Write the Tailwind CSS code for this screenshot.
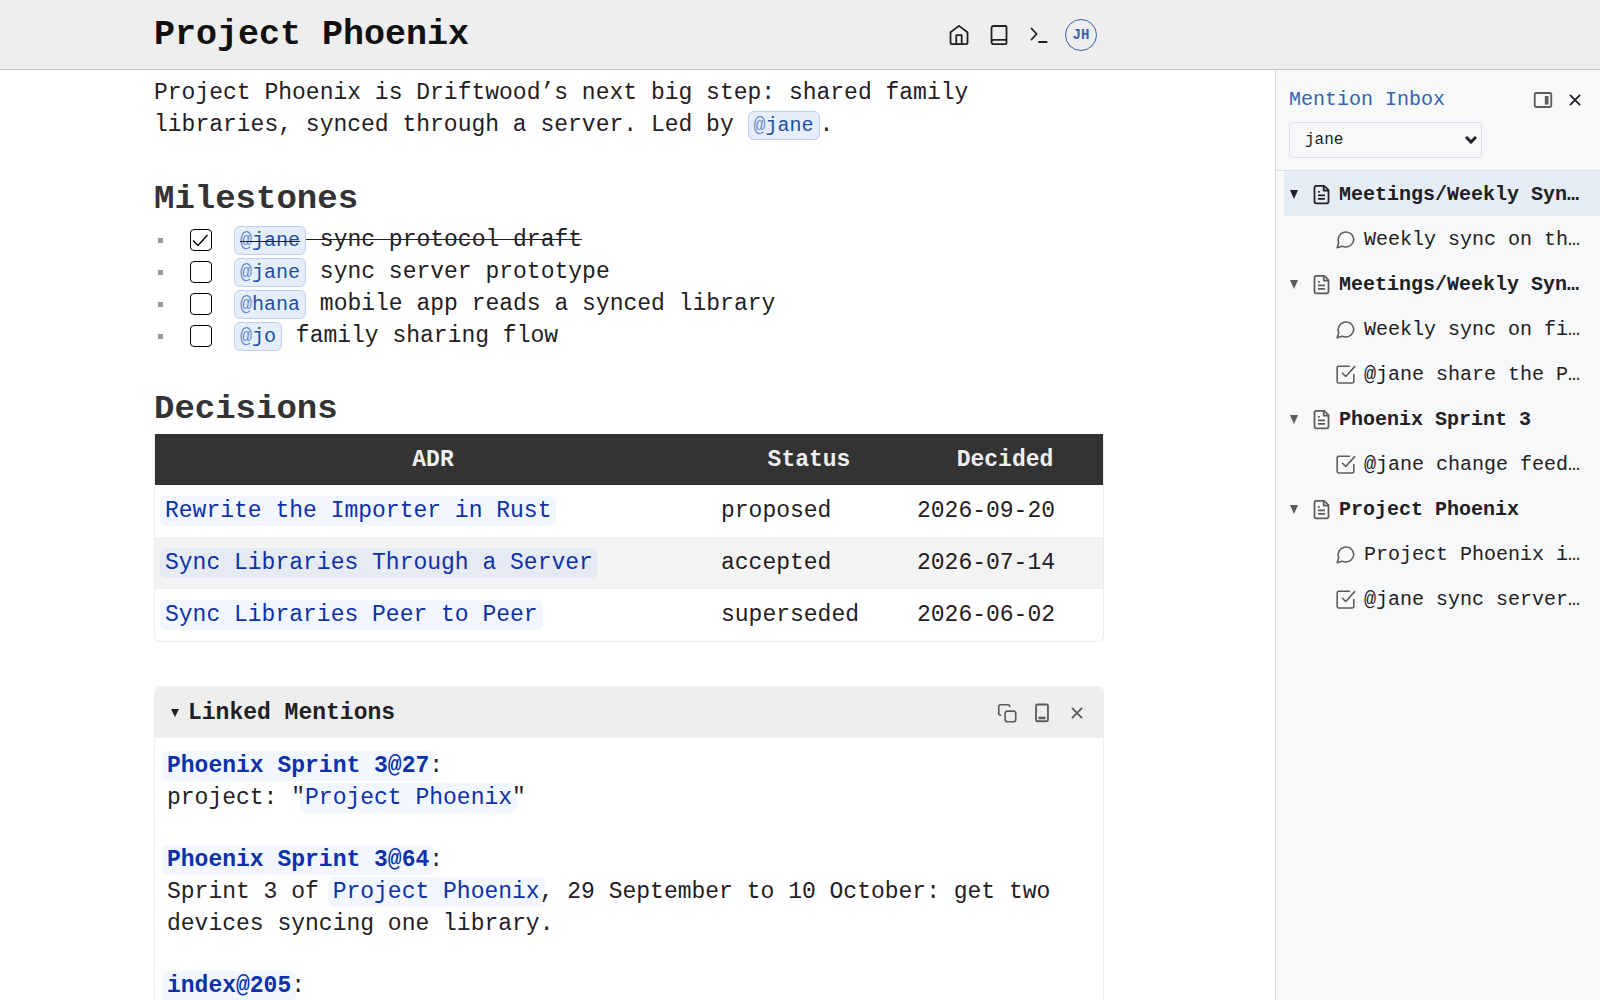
<!DOCTYPE html>
<html lang="en">
<head>
<meta charset="utf-8">
<title>Project Phoenix</title>
<script src="https://cdn.jsdelivr.net/npm/@tailwindcss/browser@4"></script>
</head>
<body class="flex h-screen flex-col overflow-hidden bg-white font-['Liberation_Mono',monospace] text-[23px] leading-8 text-[#1f2023]">

<svg class="hidden" aria-hidden="true">
  <symbol id="home" viewBox="0 0 24 24"><path d="M3.500 9.200L12 2.900l8.500 6.300v10.300a1.600 1.600 0 0 1-1.600 1.600H5.100a1.600 1.600 0 0 1-1.600-1.600z"/><path d="M9.300 21v-8.800h5.400V21"/></symbol>
  <symbol id="book" viewBox="0 0 24 24"><path d="M4.500 19V5a2 2 0 0 1 2-2H18.500a1 1 0 0 1 1 1V20.100a1 1 0 0 1-1 1H6.500a2 2 0 0 1-2-2a2 2 0 0 1 2-2.300H19.500"/></symbol>
  <symbol id="terminal" viewBox="0 0 24 24"><path d="M4.500 5.500l5.200 5.500-5.200 5.500M12 19h7.700"/></symbol>
  <symbol id="close" viewBox="0 0 24 24"><path d="M17 7L7 17M7 7l10 10"/></symbol>
  <symbol id="copy" viewBox="0 0 24 24"><rect x="10" y="10" width="11.500" height="11.500" rx="2.500"/><path d="M5 14.500a2 2 0 0 1-2-2V5a2 2 0 0 1 2-2h8a2 2 0 0 1 2 2"/></symbol>
  <symbol id="dock-bottom" viewBox="0 0 24 24"><rect x="5.500" y="2.700" width="13" height="18.300" rx="1.500"/><path d="M8.200 17.400h7.600" stroke-width="2.800"/></symbol>
  <symbol id="dock-right" viewBox="0 0 24 24"><rect x="3" y="4.400" width="18" height="15.200" rx="1.500"/><path d="M16 7.600v9.400" stroke-width="4"/></symbol>
  <symbol id="file" viewBox="0 0 24 24"><path d="M15 2H6a2 2 0 0 0-2 2v16a2 2 0 0 0 2 2h12a2 2 0 0 0 2-2V7zM14.500 2v5.500H20M16 13H8M16 17H8M10 9H8"/></symbol>
  <symbol id="comment" viewBox="0 0 24 24"><path d="M21.500 11.500a9 9 0 0 1-9.500 9 9.500 9.500 0 0 1-4-.9L2.500 21.500l1.700-5.700A9 9 0 1 1 21.500 11.500z"/></symbol>
  <symbol id="task" viewBox="0 0 24 24"><path d="M8.500 10.500l3.800 3.800L22.500 3M21.500 12v8a1.700 1.700 0 0 1-1.700 1.700H4.200A1.700 1.700 0 0 1 2.500 20V4.200a1.700 1.700 0 0 1 1.700-1.700h12.300"/></symbol>
</svg>

<header class="h-[70px] shrink-0 border-b border-[#c8c8c8] bg-[#eeeeee] pr-[342px]">
  <div class="mx-auto flex h-full w-full max-w-[950px] items-center justify-between pr-[7px]">
    <h1 class="text-[35px] leading-[48px] font-bold text-[#111111]">Project Phoenix</h1>
    <div class="flex items-center gap-[14px]">
      <nav class="flex items-center gap-4" aria-label="Main">
        <button type="button" aria-label="Home"><svg class="size-6 fill-none stroke-current stroke-[1.8] [stroke-linecap:round] [stroke-linejoin:round]"><use href="#home"/></svg></button>
        <button type="button" aria-label="Library"><svg class="size-6 fill-none stroke-current stroke-[1.8] [stroke-linecap:round] [stroke-linejoin:round]"><use href="#book"/></svg></button>
        <button type="button" aria-label="Commands"><svg class="size-6 fill-none stroke-current stroke-[1.8] [stroke-linecap:round] [stroke-linejoin:round]"><use href="#terminal"/></svg></button>
      </nav>
      <button type="button" aria-label="Account JH" class="grid size-8 place-items-center rounded-full border border-[#3564ae] text-[14px] leading-none font-bold text-[#3564ae]">JH</button>
    </div>
  </div>
</header>

<div class="flex min-h-0 flex-1">
  <main class="min-w-0 flex-1 overflow-hidden pr-[17px]">
    <div class="mx-auto w-full max-w-[950px] pt-[7px]">
      <p>Project Phoenix is Driftwood’s next big step: shared family libraries, synced through a server. Led by <a href="#" class="rounded-md border border-[#bfd0ee] bg-[#e6eefb] px-[5px] py-[2px] text-[20px] text-[#1c4fa3]"><span class="text-[#6d8fcb]">@</span>jane</a>.</p>

      <h2 class="mt-8 text-[34px] leading-[50px] font-bold text-[#333333]">Milestones</h2>
      <ul>
        <li class="flex h-8 items-center">
          <span class="ml-1 size-[5px] bg-[#999999]"></span>
          <span class="relative ml-[27px] size-[22px]">
            <input id="m1" type="checkbox" checked class="block size-[22px] appearance-none rounded-sm border border-black bg-white">
            <svg class="pointer-events-none absolute inset-0 size-[22px] fill-none stroke-black stroke-[1.4]" viewBox="0 0 22 22"><path d="M3 11.500l5 5L17.500 6"/></svg>
          </span>
          <label for="m1" class="ml-[22px] line-through decoration-1"><span class="rounded-md border border-[#bfd0ee] bg-[#e6eefb] px-[5px] py-[2px] text-[20px] text-[#1c4fa3]"><span class="text-[#6d8fcb]">@</span>jane</span> sync protocol draft</label>
        </li>
        <li class="flex h-8 items-center">
          <span class="ml-1 size-[5px] bg-[#999999]"></span>
          <input id="m2" type="checkbox" class="ml-[27px] size-[22px] appearance-none rounded-sm border border-black bg-white">
          <label for="m2" class="ml-[22px]"><span class="rounded-md border border-[#bfd0ee] bg-[#e6eefb] px-[5px] py-[2px] text-[20px] text-[#1c4fa3]"><span class="text-[#6d8fcb]">@</span>jane</span> sync server prototype</label>
        </li>
        <li class="flex h-8 items-center">
          <span class="ml-1 size-[5px] bg-[#999999]"></span>
          <input id="m3" type="checkbox" class="ml-[27px] size-[22px] appearance-none rounded-sm border border-black bg-white">
          <label for="m3" class="ml-[22px]"><span class="rounded-md border border-[#bfd0ee] bg-[#e6eefb] px-[5px] py-[2px] text-[20px] text-[#1c4fa3]"><span class="text-[#6d8fcb]">@</span>hana</span> mobile app reads a synced library</label>
        </li>
        <li class="flex h-8 items-center">
          <span class="ml-1 size-[5px] bg-[#999999]"></span>
          <input id="m4" type="checkbox" class="ml-[27px] size-[22px] appearance-none rounded-sm border border-black bg-white">
          <label for="m4" class="ml-[22px]"><span class="rounded-md border border-[#bfd0ee] bg-[#e6eefb] px-[5px] py-[2px] text-[20px] text-[#1c4fa3]"><span class="text-[#6d8fcb]">@</span>jo</span> family sharing flow</label>
        </li>
      </ul>

      <h2 class="mt-8 text-[34px] leading-[50px] font-bold text-[#333333]">Decisions</h2>
      <div class="overflow-hidden rounded-b-md border border-t-0 border-[#ebebeb]">
        <table class="w-full table-fixed text-left">
          <thead class="bg-[#333333] text-center text-[#eeeeee]">
            <tr class="h-[51px]"><th class="w-[556px] px-[10px]">ADR</th><th class="px-[10px]">Status</th><th class="px-[10px]">Decided</th></tr>
          </thead>
          <tbody>
            <tr class="h-[52px]"><td class="px-[10px]"><a href="#" class="-mx-[5px] rounded-md bg-[#0050ff]/5 px-[5px] py-[2px] text-[#0c31a8]">Rewrite the Importer in Rust</a></td><td class="px-[10px]">proposed</td><td class="px-[10px]">2026-09-20</td></tr>
            <tr class="h-[52px] bg-[#f3f3f3]"><td class="px-[10px]"><a href="#" class="-mx-[5px] rounded-md bg-[#0050ff]/5 px-[5px] py-[2px] text-[#0c31a8]">Sync Libraries Through a Server</a></td><td class="px-[10px]">accepted</td><td class="px-[10px]">2026-07-14</td></tr>
            <tr class="h-[52px]"><td class="px-[10px]"><a href="#" class="-mx-[5px] rounded-md bg-[#0050ff]/5 px-[5px] py-[2px] text-[#0c31a8]">Sync Libraries Peer to Peer</a></td><td class="px-[10px]">superseded</td><td class="px-[10px]">2026-06-02</td></tr>
          </tbody>
        </table>
      </div>

      <section class="mt-11 rounded-md border border-[#eeeeee] pb-40">
        <div class="flex h-[51px] items-center rounded-t-md bg-[#eeeeee] pr-[15px] pl-4">
          <button type="button" class="flex items-center gap-[9px] font-bold" aria-expanded="true"><svg class="h-2 w-2 fill-current" viewBox="0 0 8 8"><path d="M0 0h8L4 8z"/></svg>Linked Mentions</button>
          <div class="ml-auto flex gap-[13px] text-[#5c5c5c]">
            <button type="button" aria-label="Copy"><svg class="size-[22px] fill-none stroke-current stroke-[1.8] [stroke-linecap:round] [stroke-linejoin:round]"><use href="#copy"/></svg></button>
            <button type="button" aria-label="Dock at bottom"><svg class="size-[22px] fill-none stroke-current stroke-2"><use href="#dock-bottom"/></svg></button>
            <button type="button" aria-label="Close"><svg class="size-[22px] fill-none stroke-current stroke-2 [stroke-linecap:round]"><use href="#close"/></svg></button>
          </div>
        </div>
        <div class="flex flex-col gap-[30px] px-3 pt-3">
          <p><a href="#" class="-mx-[5px] rounded-md bg-[#0050ff]/5 px-[5px] py-[2px] font-bold text-[#0c31a8]">Phoenix Sprint 3@27</a>:<br>project: "<a href="#" class="-mx-[5px] rounded-md bg-[#0050ff]/5 px-[5px] py-[2px] text-[#0c31a8]">Project Phoenix</a>"</p>
          <p><a href="#" class="-mx-[5px] rounded-md bg-[#0050ff]/5 px-[5px] py-[2px] font-bold text-[#0c31a8]">Phoenix Sprint 3@64</a>:<br>Sprint 3 of <a href="#" class="-mx-[5px] rounded-md bg-[#0050ff]/5 px-[5px] py-[2px] text-[#0c31a8]">Project Phoenix</a>, 29 September to 10 October: get two devices syncing one library.</p>
          <p><a href="#" class="-mx-[5px] rounded-md bg-[#0050ff]/5 px-[5px] py-[2px] font-bold text-[#0c31a8]">index@205</a>:</p>
        </div>
      </section>
    </div>
  </main>

  <aside class="w-[325px] shrink-0 border-l border-[#d5d8dc] bg-[#f6f8fa] text-[20px]">
    <div class="h-[101px] border-b border-[#dcdfe3] pt-[14px] pl-[13px]">
      <div class="flex items-center pr-[14px]">
        <h2 class="text-[#3564ae]">Mention Inbox</h2>
        <div class="ml-auto flex gap-[10px]">
          <button type="button" aria-label="Dock at right" class="text-[#5c5c5c]"><svg class="size-[22px] fill-none stroke-current stroke-2"><use href="#dock-right"/></svg></button>
          <button type="button" aria-label="Close inbox"><svg class="size-[22px] fill-none stroke-current stroke-2 [stroke-linecap:round]"><use href="#close"/></svg></button>
        </div>
      </div>
      <div class="relative mt-[6px] w-[193px]">
        <select aria-label="Person" class="block h-9 w-full appearance-none rounded-sm border border-[#dcdfe3] bg-transparent px-[15px] text-[16px]"><option>jane</option></select>
        <svg class="pointer-events-none absolute top-[14px] right-[5px] h-2 w-3 fill-none stroke-current stroke-3" viewBox="0 0 12 8"><path d="M1 1l5 5 5-5"/></svg>
      </div>
    </div>
    <ul class="pl-2 text-nowrap">
      <li class="flex h-[45px] items-center bg-[#e5ecf6] pt-[2px] pr-4 pl-[6px] font-bold"><svg class="h-[9px] w-2 shrink-0 fill-current" viewBox="0 0 8 9"><path d="M0 0h8L4 9z"/></svg><svg class="mr-[7px] ml-[13px] size-[21px] shrink-0 fill-none stroke-current stroke-2 [stroke-linejoin:round]"><use href="#file"/></svg><span>Meetings/Weekly Syn…</span></li>
      <li class="flex h-[45px] items-center pt-[2px] pr-4 pl-[51px]"><svg class="mr-2 size-[21px] shrink-0 fill-none stroke-[#5c5c5c] stroke-[1.8] [stroke-linejoin:round]"><use href="#comment"/></svg><span>Weekly sync on th…</span></li>
      <li class="flex h-[45px] items-center pt-[2px] pr-4 pl-[6px] font-bold"><svg class="h-[9px] w-2 shrink-0 fill-[#5c5c5c]" viewBox="0 0 8 9"><path d="M0 0h8L4 9z"/></svg><svg class="mr-[7px] ml-[13px] size-[21px] shrink-0 fill-none stroke-[#5c5c5c] stroke-2 [stroke-linejoin:round]"><use href="#file"/></svg><span>Meetings/Weekly Syn…</span></li>
      <li class="flex h-[45px] items-center pt-[2px] pr-4 pl-[51px]"><svg class="mr-2 size-[21px] shrink-0 fill-none stroke-[#5c5c5c] stroke-[1.8] [stroke-linejoin:round]"><use href="#comment"/></svg><span>Weekly sync on fi…</span></li>
      <li class="flex h-[45px] items-center pt-[2px] pr-4 pl-[51px]"><svg class="mr-2 size-[21px] shrink-0 fill-none stroke-[#5c5c5c] stroke-[1.8] [stroke-linecap:round] [stroke-linejoin:round]"><use href="#task"/></svg><span>@jane share the P…</span></li>
      <li class="flex h-[45px] items-center pt-[2px] pr-4 pl-[6px] font-bold"><svg class="h-[9px] w-2 shrink-0 fill-[#5c5c5c]" viewBox="0 0 8 9"><path d="M0 0h8L4 9z"/></svg><svg class="mr-[7px] ml-[13px] size-[21px] shrink-0 fill-none stroke-[#5c5c5c] stroke-2 [stroke-linejoin:round]"><use href="#file"/></svg><span>Phoenix Sprint 3</span></li>
      <li class="flex h-[45px] items-center pt-[2px] pr-4 pl-[51px]"><svg class="mr-2 size-[21px] shrink-0 fill-none stroke-[#5c5c5c] stroke-[1.8] [stroke-linecap:round] [stroke-linejoin:round]"><use href="#task"/></svg><span>@jane change feed…</span></li>
      <li class="flex h-[45px] items-center pt-[2px] pr-4 pl-[6px] font-bold"><svg class="h-[9px] w-2 shrink-0 fill-[#5c5c5c]" viewBox="0 0 8 9"><path d="M0 0h8L4 9z"/></svg><svg class="mr-[7px] ml-[13px] size-[21px] shrink-0 fill-none stroke-[#5c5c5c] stroke-2 [stroke-linejoin:round]"><use href="#file"/></svg><span>Project Phoenix</span></li>
      <li class="flex h-[45px] items-center pt-[2px] pr-4 pl-[51px]"><svg class="mr-2 size-[21px] shrink-0 fill-none stroke-[#5c5c5c] stroke-[1.8] [stroke-linejoin:round]"><use href="#comment"/></svg><span>Project Phoenix i…</span></li>
      <li class="flex h-[45px] items-center pt-[2px] pr-4 pl-[51px]"><svg class="mr-2 size-[21px] shrink-0 fill-none stroke-[#5c5c5c] stroke-[1.8] [stroke-linecap:round] [stroke-linejoin:round]"><use href="#task"/></svg><span>@jane sync server…</span></li>
    </ul>
  </aside>
</div>
</body>
</html>
